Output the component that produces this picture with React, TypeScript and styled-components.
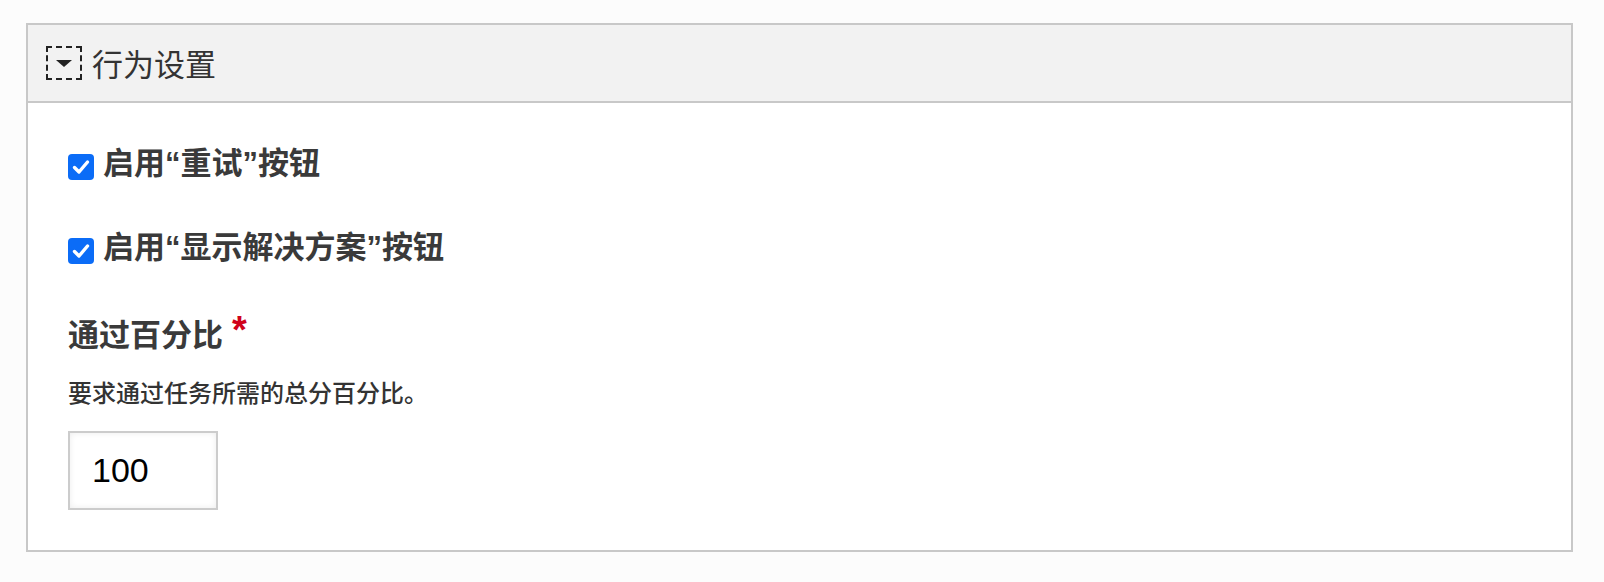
import React from "react";
import styled, { createGlobalStyle } from "styled-components";

const GlobalStyle = createGlobalStyle`
	body {
		margin: 0;
		background: #fcfcfc;
		font-family: "Noto Sans CJK SC", "Liberation Sans", sans-serif;
		color: #333;
	}
`;

const Panel = styled.section`
	margin: 23px 31px 0 26px;
	border: 2px solid #c8c8c8;
	background: #fff;
`;

const Header = styled.div`
	display: flex;
	align-items: center;
	height: 76px;
	padding-left: 18px;
	background: #f2f2f2;
	border-bottom: 2px solid #c8c8c8;
`;

const Toggle = styled.span`
	display: flex;
	align-items: center;
	justify-content: center;
	box-sizing: border-box;
	width: 36px;
	height: 34px;
	border: 2px dashed #222;
	margin-right: 10px;
`;

const Caret = styled.span`
	width: 0;
	height: 0;
	border-left: 8px solid transparent;
	border-right: 8px solid transparent;
	border-top: 7px solid #222;
`;

const HeaderTitle = styled.span`
	font-size: 31px;
	line-height: 40px;
	color: #333;
`;

const Body = styled.div`
	display: flex;
	flex-direction: column;
	align-items: flex-start;
	padding: 44px 40px 40px;
`;

const CheckRow = styled.label<{ $gap?: number }>`
	display: flex;
	align-items: center;
	height: 40px;
	margin-top: ${(p) => p.$gap ?? 0}px;
	font-family: "Liberation Sans", "Noto Sans CJK SC", sans-serif;
	font-size: 31px;
	font-weight: 700;
	color: #3a3a3a;
`;

const CheckText = styled.span`
	line-height: 40px;
	padding-bottom: 6px;
`;

const Box = styled.span`
	display: flex;
	align-items: center;
	justify-content: center;
	width: 26px;
	height: 26px;
	border-radius: 4px;
	background: #0b6cf7;
	margin-right: 9px;
`;

const FieldLabel = styled.div`
	display: flex;
	align-items: flex-start;
	margin-top: 42px;
	font-size: 31px;
	line-height: 40px;
	font-weight: 700;
	color: #3a3a3a;
`;

const Required = styled.span`
	color: #d0021b;
	font-size: 38px;
	line-height: 34px;
	font-weight: 700;
	margin-left: 9px;
	font-family: "Liberation Sans", sans-serif;
`;

const Hint = styled.div`
	margin-top: 24px;
	font-size: 24px;
	line-height: 30px;
	font-weight: 500;
	color: #333;
`;

const NumberInput = styled.input`
	box-sizing: border-box;
	width: 150px;
	height: 79px;
	margin-top: 24px;
	padding: 0 0 0 22px;
	border: 2px solid #ccc;
	box-shadow: inset 0 0 6px rgba(0, 0, 0, 0.08);
	font-family: "Liberation Sans", Arial, sans-serif;
	font-size: 34px;
	color: #000;
	outline: none;
`;

const Check = () => (
	<Box>
		<svg width="20" height="20" viewBox="0 0 20 20">
			<path
				d="M3.5 10.5 L8 15 L16.5 5"
				fill="none"
				stroke="#fff"
				strokeWidth="3.4"
				strokeLinecap="round"
				strokeLinejoin="round"
			/>
		</svg>
	</Box>
);

const App = () => {
	return (
		<>
			<GlobalStyle />
			<Panel>
				<Header>
					<Toggle>
						<Caret />
					</Toggle>
					<HeaderTitle>行为设置</HeaderTitle>
				</Header>
				<Body>
					<CheckRow>
						<Check />
						<CheckText>启用“重试”按钮</CheckText>
					</CheckRow>
					<CheckRow $gap={44}>
						<Check />
						<CheckText>启用“显示解决方案”按钮</CheckText>
					</CheckRow>
					<FieldLabel>
						通过百分比
						<Required>*</Required>
					</FieldLabel>
					<Hint>要求通过任务所需的总分百分比。</Hint>
					<NumberInput type="text" defaultValue="100" />
				</Body>
			</Panel>
		</>
	);
};

export default App;
